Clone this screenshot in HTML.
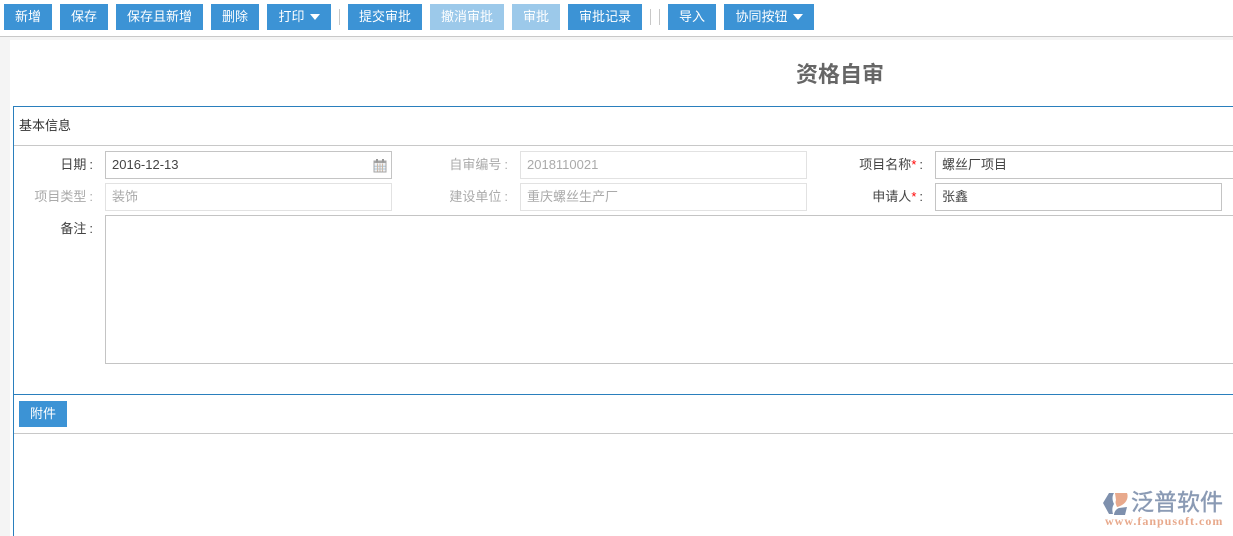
<!DOCTYPE html>
<html lang="zh">
<head>
<meta charset="utf-8">
<title>资格自审</title>
<style>
html,body{margin:0;padding:0;width:1233px;height:536px;overflow:hidden;background:#fff}
body{position:relative;font-family:"Liberation Sans","Noto Sans CJK SC","WenQuanYi Zen Hei",sans-serif;font-size:13px;color:#444}
.a{position:absolute;box-sizing:border-box}
.btn{position:absolute;top:4px;height:26px;line-height:25px;background:#3c93d5;color:#fff;text-align:center;font-size:13px;white-space:nowrap}
.btn.off{background:#9cc9ea}
.caret{display:inline-block;width:0;height:0;border-left:5px solid transparent;border-right:5px solid transparent;border-top:6px solid #fff;margin-left:5px;vertical-align:1px}
.sep{position:absolute;top:9px;width:1px;height:16px;background:#c8c8c8}
.lbl{position:absolute;text-align:right;white-space:nowrap;height:20px;line-height:20px;font-size:13px;color:#444}
.lbl.off{color:#aaa}
.lbl i{color:#f00;font-style:normal}
.lbl b{font-weight:normal;margin-left:3px}
.fld{position:absolute;box-sizing:border-box;height:28px;border:1px solid #c4c4c4;line-height:25px;padding-left:6px;font-size:13px;color:#444;white-space:nowrap;background:#fff}
.fld.off{border-color:#e2e2e2;color:#aaa}
</style>
</head>
<body>
<div class="a" style="left:0;top:36px;width:1233px;height:1px;background:#c8c8c8"></div>
<div class="a" style="left:0;top:37px;width:1233px;height:3px;background:#f4f4f4"></div>
<div class="a" style="left:0;top:40px;width:10px;height:496px;background:#f4f4f4"></div>

<div class="btn" style="left:4px;width:48px">新增</div>
<div class="btn" style="left:60px;width:48px">保存</div>
<div class="btn" style="left:116px;width:87px">保存且新增</div>
<div class="btn" style="left:211px;width:48px">删除</div>
<div class="btn" style="left:267px;width:64px">打印<span class="caret"></span></div>
<div class="sep" style="left:339px"></div>
<div class="btn" style="left:348px;width:74px">提交审批</div>
<div class="btn off" style="left:430px;width:74px">撤消审批</div>
<div class="btn off" style="left:512px;width:48px">审批</div>
<div class="btn" style="left:568px;width:74px">审批记录</div>
<div class="sep" style="left:650px"></div>
<div class="sep" style="left:659px"></div>
<div class="btn" style="left:668px;width:48px">导入</div>
<div class="btn" style="left:724px;width:90px">协同按钮<span class="caret"></span></div>

<div class="a" style="left:796px;top:60px;width:100px;height:30px;line-height:30px;font-size:22px;font-weight:bold;color:#666;white-space:nowrap">资格自审</div>

<div class="a" style="left:13px;top:106px;width:1220px;height:430px;border-left:1px solid #2a7fbd;border-top:1px solid #2a7fbd"></div>
<div class="a" style="left:19px;top:116px;height:20px;line-height:20px;color:#333;white-space:nowrap">基本信息</div>
<div class="a" style="left:14px;top:145px;width:1219px;height:1px;background:#c8c8c8"></div>

<div class="lbl" style="left:20px;width:73px;top:155px">日期<b>:</b></div>
<div class="fld" style="left:105px;top:151px;width:287px">2016-12-13
<svg style="position:absolute;left:267px;top:6px" width="14" height="15" viewBox="0 0 14 15"><rect x="1" y="3" width="12" height="11" fill="#eef0f2" stroke="#a5a5a5" stroke-width="1"/><rect x="1" y="3" width="12" height="2" fill="#a5a5a5"/><rect x="3" y="1" width="2" height="3.5" fill="#999"/><rect x="9" y="1" width="2" height="3.5" fill="#999"/><path d="M1.5 8.2h11M1.5 11h11" stroke="#a9c3d8" stroke-width="1" fill="none"/><path d="M4.5 5.5v8M7 5.5v8M9.5 5.5v8" stroke="#cdb9a6" stroke-width="1" fill="none"/></svg></div>
<div class="lbl off" style="left:20px;width:73px;top:187px">项目类型<b>:</b></div>
<div class="fld off" style="left:105px;top:183px;width:287px">装饰</div>
<div class="lbl" style="left:20px;width:73px;top:219px">备注<b>:</b></div>
<div class="a" style="left:105px;top:215px;width:1128px;height:149px;border:1px solid #c4c4c4;border-right:0"></div>

<div class="lbl off" style="left:430px;width:78px;top:155px">自审编号<b>:</b></div>
<div class="fld off" style="left:520px;top:151px;width:287px">2018110021</div>
<div class="lbl off" style="left:430px;width:78px;top:187px">建设单位<b>:</b></div>
<div class="fld off" style="left:520px;top:183px;width:287px">重庆螺丝生产厂</div>

<div class="lbl" style="left:840px;width:83px;top:155px">项目名称<i>*</i><b>:</b></div>
<div class="fld" style="left:935px;top:151px;width:298px;border-right:0">螺丝厂项目</div>
<div class="lbl" style="left:840px;width:83px;top:187px">申请人<i>*</i><b>:</b></div>
<div class="fld" style="left:935px;top:183px;width:287px">张鑫</div>

<div class="a" style="left:14px;top:394px;width:1219px;height:1px;background:#2a7fbd"></div>
<div class="btn" style="left:19px;top:401px;width:48px">附件</div>
<div class="a" style="left:14px;top:433px;width:1219px;height:1px;background:#c8c8c8"></div>

<svg class="a" style="left:1103px;top:491px" width="27" height="26" viewBox="0 0 27 26">
<path d="M6 2L0 12l6 11 4 0C9 19 9 16 11 13 9 9 9 5 11 2z" fill="#7e90ad"/>
<path d="M12 2h12c2 5-1 12-10 14-1-3-2-4-1-7z" fill="#e8a98c"/>
<path d="M11 24c0-3 2-6 5-7l8-1-2 8z" fill="#7e90ad"/>
</svg>
<div class="a" style="left:1131px;top:488px;height:28px;line-height:28px;font-size:23px;-webkit-text-stroke:0.4px #8a9ab4;color:#8a9ab4;white-space:nowrap">泛普软件</div>
<div class="a" style="left:1105px;top:514px;height:14px;line-height:14px;font-size:12px;font-family:'Liberation Serif',serif;font-weight:bold;letter-spacing:1px;color:#e8a98c;white-space:nowrap">www.fanpusoft.com</div>
</body>
</html>
